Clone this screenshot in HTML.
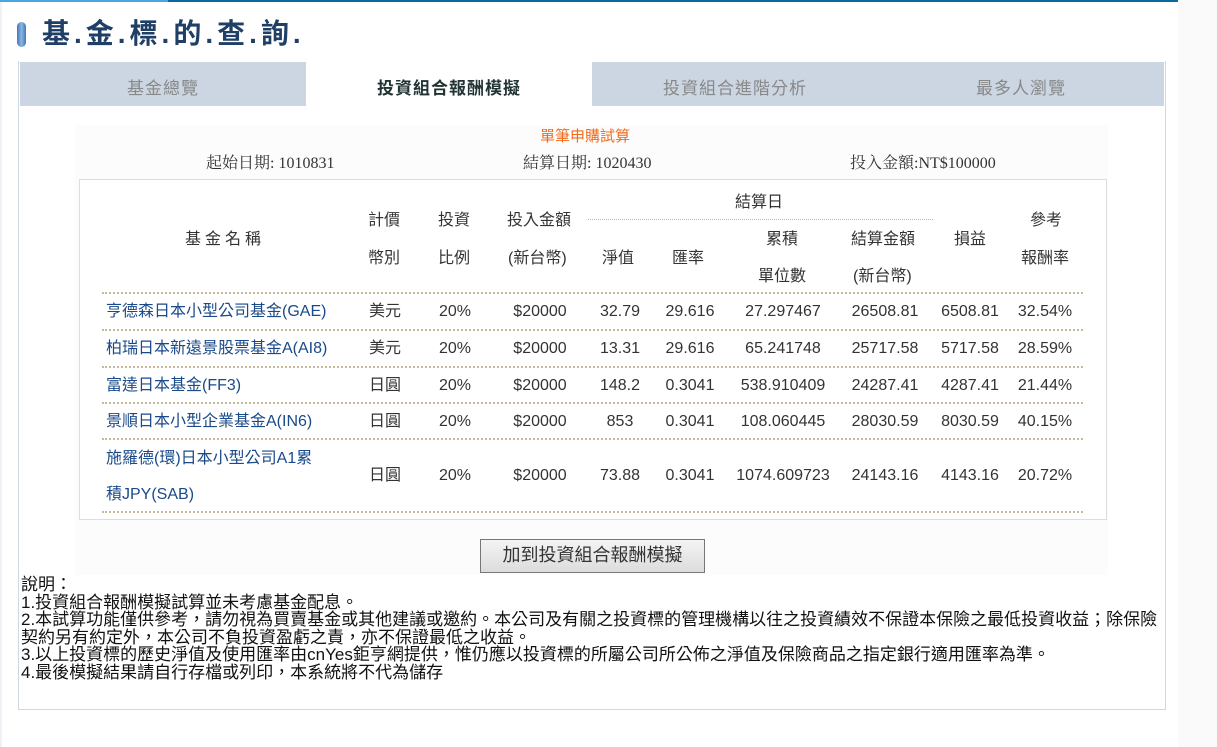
<!DOCTYPE html>
<html><head><meta charset="utf-8"><style>
body{margin:0;width:1217px;height:747px;background:#fff;font-family:"Liberation Sans","Noto Sans CJK TC",sans-serif;position:relative;overflow:hidden}
.abs{position:absolute}
.top{left:0;top:0;width:1178px;height:2px;background:#0a6aa0}
.top2{left:0;top:0;width:168px;height:2px;background:#4aa6e0}
.rbg{left:1178px;top:0;width:39px;height:747px;background:#fafafa}
.lbar{left:0;top:0;width:2px;height:747px;background:#eef2f6}
.title{left:42px;top:17px;font-size:28px;line-height:34px;font-weight:bold;color:#1f3f66;letter-spacing:4px}
.pill{left:17px;top:22px;width:9px;height:25px;border-radius:5px;background:linear-gradient(90deg,#3f78b8,#8cb6e0,#3f78b8)}
.box{left:18px;top:61px;width:1146px;height:648px;border:1px solid #cfd8e2;border-top:none}
.tab{top:62px;height:44px;width:286px;background:#cbd6e2;color:#888;font-size:17px;text-align:center;line-height:54px;letter-spacing:1px}
.tab.on{background:#fff;color:#233;font-weight:bold}
.panel{left:75px;top:125px;width:1033px;height:450px;background:#fcfcfc}
.tbox{left:79px;top:179px;width:1026px;height:339px;border:1px solid #ddd;background:#fff}
.t{font-size:16px;line-height:18px;color:#333;white-space:nowrap}
.c{text-align:center}
.dl{height:0;border-top:2px dotted #c8b89a;left:102px;width:981px}
.n{color:#1a4a8a}
.btn{left:480px;top:539px;width:223px;height:32px;border:1px solid #777;background:linear-gradient(#f4f4f4,#dcdcdc);font-size:18px;color:#333;text-align:center;line-height:30px}
.notes{left:21px;top:576px;width:1145px;font-size:17px;line-height:17.6px;color:#111}
</style></head><body>
<div class="abs rbg"></div><div class="abs lbar"></div>
<div class="abs top"></div><div class="abs top2"></div>
<div class="abs pill"></div>
<div class="abs title">基.金.標.的.查.詢.</div>
<div class="abs box"></div>
<div class="abs tab" style="left:20px">基金總覽</div>
<div class="abs tab on" style="left:306px">投資組合報酬模擬</div>
<div class="abs tab" style="left:592px">投資組合進階分析</div>
<div class="abs tab" style="left:878px">最多人瀏覽</div>
<div class="abs panel"></div>
<div class="abs t" style="left:540px;top:128px;color:#f26a1b;font-size:15px">單筆申購試算</div>
<div class="abs t" style="left:206px;top:155px;font-family:'Liberation Serif','Noto Serif CJK SC',serif">起始日期: 1010831</div>
<div class="abs t" style="left:523px;top:155px;font-family:'Liberation Serif','Noto Serif CJK SC',serif">結算日期: 1020430</div>
<div class="abs t" style="left:850px;top:155px;font-family:'Liberation Serif','Noto Serif CJK SC',serif">投入金額:NT$100000</div>
<div class="abs tbox"></div>
<div class="abs t" style="left:185px;top:231px;letter-spacing:4px">基金名稱</div>
<div class="abs t" style="left:368px;top:212px">計價</div><div class="abs t" style="left:368px;top:250px">幣別</div>
<div class="abs t" style="left:438px;top:212px">投資</div><div class="abs t" style="left:438px;top:250px">比例</div>
<div class="abs t" style="left:507px;top:212px">投入金額</div><div class="abs t" style="left:508px;top:250px">(新台幣)</div>
<div class="abs" style="left:588px;top:219px;width:345px;border-top:1px dotted #c8b89a"></div>
<div class="abs t" style="left:735px;top:194px">結算日</div>
<div class="abs t" style="left:602px;top:250px">淨值</div>
<div class="abs t" style="left:672px;top:250px">匯率</div>
<div class="abs t" style="left:766px;top:231px">累積</div><div class="abs t" style="left:758px;top:268px">單位數</div>
<div class="abs t" style="left:851px;top:231px">結算金額</div><div class="abs t" style="left:853px;top:268px">(新台幣)</div>
<div class="abs t" style="left:954px;top:231px">損益</div>
<div class="abs t" style="left:1030px;top:212px">參考</div><div class="abs t" style="left:1021px;top:250px">報酬率</div>
<div class="abs dl" style="top:292px"></div>
<div class="abs dl" style="top:329px"></div>
<div class="abs dl" style="top:366px"></div>
<div class="abs dl" style="top:402px"></div>
<div class="abs dl" style="top:438px"></div>
<div class="abs dl" style="top:511px"></div>
<div class="abs t n" style="left:106px;top:303px">亨德森日本小型公司基金(GAE)</div>
<div class="abs t n" style="left:106px;top:340px">柏瑞日本新遠景股票基金A(AI8)</div>
<div class="abs t n" style="left:106px;top:377px">富達日本基金(FF3)</div>
<div class="abs t n" style="left:106px;top:413px">景順日本小型企業基金A(IN6)</div>
<div class="abs t n" style="left:106px;top:450px">施羅德(環)日本小型公司A1累</div>
<div class="abs t n" style="left:106px;top:486px">積JPY(SAB)</div>
<div class="abs t" style="left:369px;top:303px">美元</div><div class="abs t c" style="left:420px;width:70px;top:303px">20%</div><div class="abs t c" style="left:500px;width:80px;top:303px">$20000</div><div class="abs t c" style="left:590px;width:60px;top:303px">32.79</div><div class="abs t c" style="left:655px;width:70px;top:303px">29.616</div><div class="abs t c" style="left:728px;width:110px;top:303px">27.297467</div><div class="abs t c" style="left:845px;width:80px;top:303px">26508.81</div><div class="abs t c" style="left:932px;width:76px;top:303px">6508.81</div><div class="abs t c" style="left:1010px;width:70px;top:303px">32.54%</div>
<div class="abs t" style="left:369px;top:340px">美元</div><div class="abs t c" style="left:420px;width:70px;top:340px">20%</div><div class="abs t c" style="left:500px;width:80px;top:340px">$20000</div><div class="abs t c" style="left:590px;width:60px;top:340px">13.31</div><div class="abs t c" style="left:655px;width:70px;top:340px">29.616</div><div class="abs t c" style="left:728px;width:110px;top:340px">65.241748</div><div class="abs t c" style="left:845px;width:80px;top:340px">25717.58</div><div class="abs t c" style="left:932px;width:76px;top:340px">5717.58</div><div class="abs t c" style="left:1010px;width:70px;top:340px">28.59%</div>
<div class="abs t" style="left:369px;top:377px">日圓</div><div class="abs t c" style="left:420px;width:70px;top:377px">20%</div><div class="abs t c" style="left:500px;width:80px;top:377px">$20000</div><div class="abs t c" style="left:590px;width:60px;top:377px">148.2</div><div class="abs t c" style="left:655px;width:70px;top:377px">0.3041</div><div class="abs t c" style="left:728px;width:110px;top:377px">538.910409</div><div class="abs t c" style="left:845px;width:80px;top:377px">24287.41</div><div class="abs t c" style="left:932px;width:76px;top:377px">4287.41</div><div class="abs t c" style="left:1010px;width:70px;top:377px">21.44%</div>
<div class="abs t" style="left:369px;top:413px">日圓</div><div class="abs t c" style="left:420px;width:70px;top:413px">20%</div><div class="abs t c" style="left:500px;width:80px;top:413px">$20000</div><div class="abs t c" style="left:590px;width:60px;top:413px">853</div><div class="abs t c" style="left:655px;width:70px;top:413px">0.3041</div><div class="abs t c" style="left:728px;width:110px;top:413px">108.060445</div><div class="abs t c" style="left:845px;width:80px;top:413px">28030.59</div><div class="abs t c" style="left:932px;width:76px;top:413px">8030.59</div><div class="abs t c" style="left:1010px;width:70px;top:413px">40.15%</div>
<div class="abs t" style="left:369px;top:467px">日圓</div><div class="abs t c" style="left:420px;width:70px;top:467px">20%</div><div class="abs t c" style="left:500px;width:80px;top:467px">$20000</div><div class="abs t c" style="left:590px;width:60px;top:467px">73.88</div><div class="abs t c" style="left:655px;width:70px;top:467px">0.3041</div><div class="abs t c" style="left:728px;width:110px;top:467px">1074.609723</div><div class="abs t c" style="left:845px;width:80px;top:467px">24143.16</div><div class="abs t c" style="left:932px;width:76px;top:467px">4143.16</div><div class="abs t c" style="left:1010px;width:70px;top:467px">20.72%</div>
<div class="abs btn">加到投資組合報酬模擬</div>
<div class="abs notes">說明：<br>1.投資組合報酬模擬試算並未考慮基金配息。<br>2.本試算功能僅供參考，請勿視為買賣基金或其他建議或邀約。本公司及有關之投資標的管理機構以往之投資績效不保證本保險之最低投資收益；除保險契約另有約定外，本公司不負投資盈虧之責，亦不保證最低之收益。<br>3.以上投資標的歷史淨值及使用匯率由cnYes鉅亨網提供，惟仍應以投資標的所屬公司所公佈之淨值及保險商品之指定銀行適用匯率為準。<br>4.最後模擬結果請自行存檔或列印，本系統將不代為儲存</div>
</body></html>
